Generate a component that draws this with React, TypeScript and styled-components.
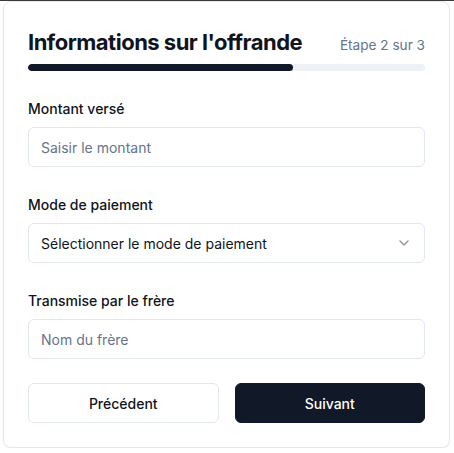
import React from 'react';
import styled, { createGlobalStyle } from 'styled-components';

const GlobalStyle = createGlobalStyle`
  * {
    box-sizing: border-box;
  }

  body {
    margin: 0;
    background: #ffffff;
    border-top: 1px solid #3a3a3a;
    font-family: Inter, "Liberation Sans", sans-serif;
    color: #0f172a;
  }
`;

const Page = styled.div`
  padding: 0 4px 0 3px;
`;

const Card = styled.div`
  width: 447px;
  height: 447px;
  border: 1px solid #e2e8f0;
  border-radius: 8px;
  background: #ffffff;
  box-shadow: 0 1px 2px rgba(15, 23, 42, 0.04);
  padding: 24px;
  display: flex;
  flex-direction: column;
`;

const Header = styled.div`
  display: flex;
  justify-content: space-between;
  align-items: baseline;
`;

const Title = styled.h2`
  margin: 0;
  font-size: 22px;
  line-height: 32px;
  font-weight: 700;
  letter-spacing: -0.5px;
  color: #0f1420;
`;

const Step = styled.span`
  font-size: 13.6px;
  line-height: 20px;
  color: #64748b;
`;

const Track = styled.div`
  margin-top: 6px;
  height: 8px;
  border-radius: 999px;
  background: #eef2f6;
  overflow: hidden;
`;

const Fill = styled.div`
  height: 100%;
  border-radius: 999px;
  background: #111827;
`;

const Form = styled.div`
  margin-top: 28px;
  display: flex;
  flex-direction: column;
  gap: 28px;
`;

const Field = styled.div`
  display: flex;
  flex-direction: column;
  gap: 8px;
`;

const Label = styled.label`
  font-size: 14px;
  line-height: 20px;
  font-weight: 500;
  color: #0f1420;
`;

const Input = styled.input`
  height: 40px;
  width: 100%;
  border: 1px solid #e2e8f0;
  border-radius: 6px;
  padding: 0 12px;
  font-family: inherit;
  font-size: 14px;
  color: #0f172a;
  background: #ffffff;
  outline: none;

  &::placeholder {
    color: #64748b;
  }
`;

const Select = styled.button`
  height: 40px;
  width: 100%;
  border: 1px solid #e2e8f0;
  border-radius: 6px;
  padding: 0 12px;
  display: flex;
  align-items: center;
  justify-content: space-between;
  font-family: inherit;
  font-size: 14px;
  color: #0f1420;
  background: #ffffff;
  text-align: left;
`;

const Chevron = styled.svg`
  width: 16px;
  height: 16px;
  color: #0f1420;
  opacity: 0.45;
`;

const Actions = styled.div`
  margin-top: 24px;
  display: grid;
  grid-template-columns: 1fr 1fr;
  gap: 16px;
`;

const Button = styled.button<{ $primary?: boolean }>`
  height: 40px;
  border-radius: 6px;
  font-family: inherit;
  font-size: 14px;
  font-weight: 500;
  border: 1px solid ${(p) => (p.$primary ? '#111827' : '#e2e8f0')};
  background: ${(p) => (p.$primary ? '#111827' : '#ffffff')};
  color: ${(p) => (p.$primary ? '#ffffff' : '#0f1420')};
`;

const App: React.FC = () => {
  const step = 2;
  const total = 3;

  return (
    <Page>
      <GlobalStyle />
      <Card>
        <Header>
          <Title>Informations sur l'offrande</Title>
          <Step>Étape {step} sur {total}</Step>
        </Header>
        <Track>
          <Fill style={{ width: `${(step / total) * 100}%` }} />
        </Track>
        <Form>
          <Field>
            <Label>Montant versé</Label>
            <Input placeholder="Saisir le montant" />
          </Field>
          <Field>
            <Label>Mode de paiement</Label>
            <Select type="button">
              <span>Sélectionner le mode de paiement</span>
              <Chevron viewBox="0 0 24 24" fill="none" stroke="currentColor" strokeWidth="2" strokeLinecap="round" strokeLinejoin="round">
                <path d="m6 9 6 6 6-6" />
              </Chevron>
            </Select>
          </Field>
          <Field>
            <Label>Transmise par le frère</Label>
            <Input placeholder="Nom du frère" />
          </Field>
        </Form>
        <Actions>
          <Button type="button">Précédent</Button>
          <Button type="button" $primary>Suivant</Button>
        </Actions>
      </Card>
    </Page>
  );
};

export default App;
